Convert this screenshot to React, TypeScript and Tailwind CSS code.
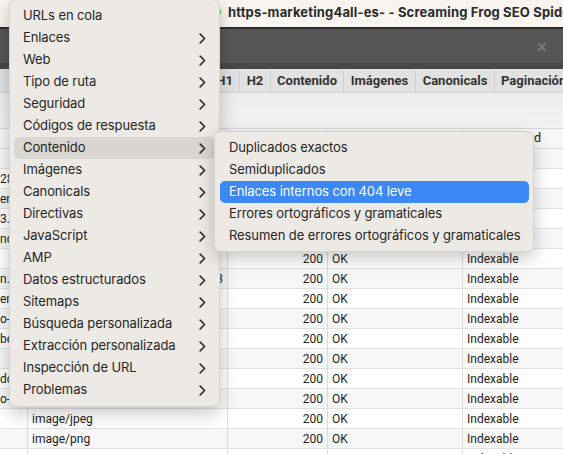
import React from "react";

const mainItems: { label: string; sub: boolean }[] = [
  { label: "URLs en cola", sub: false },
  { label: "Enlaces", sub: true },
  { label: "Web", sub: true },
  { label: "Tipo de ruta", sub: true },
  { label: "Seguridad", sub: true },
  { label: "Códigos de respuesta", sub: true },
  { label: "Contenido", sub: true },
  { label: "Imágenes", sub: true },
  { label: "Canonicals", sub: true },
  { label: "Directivas", sub: true },
  { label: "JavaScript", sub: true },
  { label: "AMP", sub: true },
  { label: "Datos estructurados", sub: true },
  { label: "Sitemaps", sub: true },
  { label: "Búsqueda personalizada", sub: true },
  { label: "Extracción personalizada", sub: true },
  { label: "Inspección de URL", sub: true },
  { label: "Problemas", sub: true },
];

const subItems = [
  "Duplicados exactos",
  "Semiduplicados",
  "Enlaces internos con 404 leve",
  "Errores ortográficos y gramaticales",
  "Resumen de errores ortográficos y gramaticales",
];

type Row = { a: string; b: string; bRight?: string; c: string; d: string; e: string };

const rows: Row[] = [
  { a: "", b: "", c: "", d: "", e: "" },
  { a: "28", b: "", c: "", d: "", e: "" },
  { a: "er", b: "", c: "", d: "", e: "" },
  { a: "3.1", b: "", c: "", d: "", e: "" },
  { a: "nd", b: "", c: "", d: "", e: "" },
  { a: "", b: "", c: "200", d: "OK", e: "Indexable" },
  { a: "n.j", b: "", bRight: "3", c: "200", d: "OK", e: "Indexable" },
  { a: "en", b: "", c: "200", d: "OK", e: "Indexable" },
  { a: "o-", b: "", c: "200", d: "OK", e: "Indexable" },
  { a: "be", b: "", c: "200", d: "OK", e: "Indexable" },
  { a: "", b: "", c: "200", d: "OK", e: "Indexable" },
  { a: "do", b: "", c: "200", d: "OK", e: "Indexable" },
  { a: "o-", b: "", c: "200", d: "OK", e: "Indexable" },
  { a: "", b: "image/jpeg", c: "200", d: "OK", e: "Indexable" },
  { a: "", b: "image/png", c: "200", d: "OK", e: "Indexable" },
  { a: "", b: "", c: "200", d: "OK", e: "Indexable" },
];

function Chevron({ color = "#333333" }: { color?: string }) {
  return (
    <svg width="7" height="11" viewBox="0 0 7 11" fill="none">
      <polyline points="1.2,1.2 5.6,5.5 1.2,9.8" stroke={color} strokeWidth="1.7" strokeLinecap="round" strokeLinejoin="round" />
    </svg>
  );
}

export default function App() {
  const tabs = [
    { label: "M", w: "w-[40px]", cls: "justify-center" },
    { label: "", w: "w-[177px]", cls: "justify-center" },
    { label: "H1", w: "w-[23px]", cls: "justify-end pr-[6px]" },
    { label: "H2", w: "w-[31px]", cls: "justify-center" },
    { label: "Contenido", w: "w-[73px]", cls: "justify-center" },
    { label: "Imágenes", w: "w-[72px]", cls: "justify-center" },
    { label: "Canonicals", w: "w-[79px]", cls: "justify-center" },
    { label: "Paginación", w: "w-[90px]", cls: "justify-start pl-[6px]" },
  ];
  return (
    <div className="relative w-[563px] h-[454px] overflow-hidden bg-white" style={{ fontFamily: "Roboto, 'Liberation Sans', sans-serif" }}>
      {/* Title bar */}
      <div className="h-[27px] bg-[#f8f4f0] relative">
        <div className="absolute left-[209px] top-[6px] w-[12px] h-[12px] rounded-full bg-[#3fbe4a]" />
        <div
          className="absolute left-[228px] top-[4px] whitespace-nowrap text-[13px] font-bold text-[#2b2b2b] leading-[16px] tracking-[0.15px]"
          style={{ fontFamily: "Inter, 'Liberation Sans', sans-serif" }}
        >
          https-marketing4all-es- - Screaming Frog SEO Spider
        </div>
      </div>
      {/* Dark bar */}
      <div className="h-[2px] bg-[#2d2d2d]" />
      <div className="h-[34px] bg-[#565656] flex items-center justify-end pr-[15px] pt-[2px]">
        <span className="text-[15px] leading-[16px] font-bold text-[#7b7b7b]" style={{ fontFamily: "'DejaVu Sans', sans-serif" }}>×</span>
      </div>
      <div className="h-[6px] bg-[#484848]" />
      {/* Tabs */}
      <div className="h-[24px] bg-[#eaeaea] flex border-b border-[#d2d2d2]">
        {tabs.map((t, i) => (
          <div
            key={i}
            className={`${t.w} ${t.cls} shrink-0 h-full bg-[#e2e2e2] border-r border-[#cfcfcf] flex items-center text-[13px] font-bold text-[#333333] whitespace-nowrap overflow-hidden rounded-t-[3px]`}
          >
            {t.label}
          </div>
        ))}
      </div>
      {/* Filter area */}
      <div className="h-[35px] bg-gradient-to-b from-[#ededed] to-[#f2f2f2]" />
      {/* Table */}
      <div className="border-t border-[#d8d8d8]">
        <div className="grid grid-cols-[28px_200px_100px_135px_1fr] h-[20px] bg-[#f7f7f7] border-b border-[#dcdcdc] text-[12px] text-[#222]">
          <div className="border-r border-[#dcdcdc]" />
          <div className="border-r border-[#dcdcdc]" />
          <div className="border-r border-[#dcdcdc]" />
          <div className="border-r border-[#dcdcdc]" />
          <div className="pl-[4px] flex items-center whitespace-nowrap text-[12.5px]">Indexabilidad</div>
        </div>
        {rows.map((r, i) => (
          <div
            key={i}
            className={`grid grid-cols-[28px_200px_100px_135px_1fr] h-[20px] border-b border-[#e2e2e2] text-[12px] text-[#1e1e1e] ${i % 2 === 0 ? "bg-[#f7f7f7]" : "bg-white"}`}
          >
            <div className="border-r border-[#dcdcdc] flex items-center overflow-hidden whitespace-nowrap">{r.a}</div>
            <div className={`border-r border-[#dcdcdc] flex items-center overflow-hidden whitespace-nowrap pl-[4px] pr-[4px] ${r.bRight ? "justify-end" : ""}`}>
              {r.bRight ? r.bRight : r.b}
            </div>
            <div className="border-r border-[#dcdcdc] flex items-center justify-end pr-[4px]">{r.c}</div>
            <div className="border-r border-[#dcdcdc] flex items-center pl-[4px]">{r.d}</div>
            <div className="flex items-center pl-[4px]">{r.e}</div>
          </div>
        ))}
      </div>

      {/* Main menu */}
      <div
        className="absolute left-[9px] top-[-1px] w-[211px] pt-[5px] pb-[5px] rounded-[7px] bg-[#edeae5] border border-[#d6d3ce] shadow-[0_6px_18px_rgba(0,0,0,0.22)] text-[13px] text-[#262626] tracking-[-0.1px]"
        style={{ fontFamily: "Inter, 'Liberation Sans', sans-serif" }}
      >
        {mainItems.map((it, i) => (
          <div
            key={i}
            className={`mx-[4px] h-[22px] rounded-[5px] flex items-center justify-between pl-[9px] pr-[9px] ${it.label === "Contenido" ? "bg-[#d9d6d1]" : ""}`}
          >
            <span className="whitespace-nowrap">{it.label}</span>
            {it.sub ? <Chevron /> : null}
          </div>
        ))}
      </div>

      {/* Submenu */}
      <div
        className="absolute left-[214px] top-[131px] w-[320px] pt-[5px] pb-[4px] rounded-[7px] bg-[#edeae5] border border-[#d6d3ce] shadow-[0_6px_18px_rgba(0,0,0,0.22)] text-[13px] text-[#262626] tracking-[-0.1px]"
        style={{ fontFamily: "Inter, 'Liberation Sans', sans-serif" }}
      >
        {subItems.map((s, i) => (
          <div
            key={i}
            className={`ml-[5px] mr-[4px] h-[22px] rounded-[5px] flex items-center pl-[9px] whitespace-nowrap ${i === 2 ? "bg-[#3b88f6] text-white" : ""}`}
          >
            {s}
          </div>
        ))}
      </div>
    </div>
  );
}
